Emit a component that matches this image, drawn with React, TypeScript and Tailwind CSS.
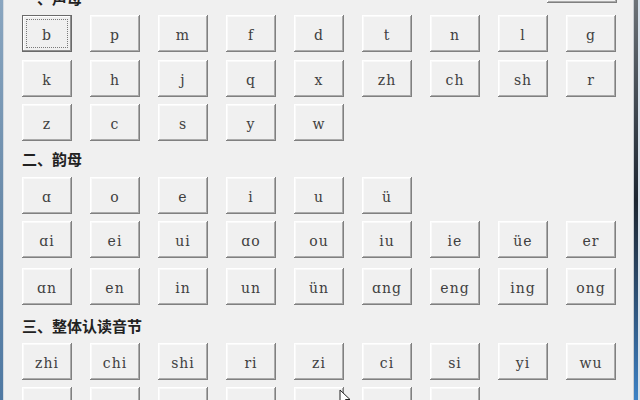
const initials = [
  ["b", "p", "m", "f", "d", "t", "n", "l", "g"],
  ["k", "h", "j", "q", "x", "zh", "ch", "sh", "r"],
  ["z", "c", "s", "y", "w"],
];

const finals = [
  ["ɑ", "o", "e", "i", "u", "ü"],
  ["ɑi", "ei", "ui", "ɑo", "ou", "iu", "ie", "üe", "er"],
  ["ɑn", "en", "in", "un", "ün", "ɑng", "eng", "ing", "ong"],
];

const whole = [
  ["zhi", "chi", "shi", "ri", "zi", "ci", "si", "yi", "wu"],
  ["yu", "ye", "yue", "yuan", "yin", "yun", "ying"],
];

const Key = ({ label, focused }: { label: string; focused?: boolean }) => (
  <button
    className={`relative h-[37px] w-[50px] shrink-0 bg-[#f0f0f0] text-[14px] leading-none tracking-[1px] text-[#404040] font-['DejaVu_Serif',serif] ${
      focused
        ? "border border-[#6a6a6a] shadow-[inset_-1px_-1px_0_#909090,inset_1px_1px_0_#ffffff]"
        : "shadow-[inset_-1px_-1px_0_#808080,inset_1px_1px_0_#ffffff,inset_-2px_-2px_0_#ababab,inset_2px_2px_0_#f9f9f9]"
    }`}
  >
    {focused && (
      <span className="absolute inset-[3px] border border-dotted border-[#7a7a7a]" />
    )}
    <span className="relative top-[1px]">{label}</span>
  </button>
);

const Row = ({ keys, className = "", focusFirst }: { keys: string[]; className?: string; focusFirst?: boolean }) => (
  <div className={`flex shrink-0 gap-[18px] ${className}`}>
    {keys.map((k, i) => (
      <Key key={k} label={k} focused={focusFirst && i === 0} />
    ))}
  </div>
);

const Heading = ({ text, className = "" }: { text: string; className?: string }) => (
  <div
    className={`flex shrink-0 items-center text-[15px] font-bold text-[#222] font-['Noto_Sans_CJK_SC',sans-serif] ${className}`}
  >
    {text}
  </div>
);

export default function App() {
  return (
    <div className="relative flex h-[400px] w-[640px] overflow-hidden bg-[#f0f0f0]">
      {/* window edge on the left */}
      <div className="flex w-[4px] shrink-0">
        <div className="w-[3px] bg-gradient-to-b from-[#8aa6c0] via-[#6b8cab] to-[#4f79a3]" />
        <div className="w-[1px] bg-[#d3d9df]" />
      </div>

      <div className="flex flex-1 flex-col pl-[18px]">
        <div className="mt-[-19px] flex h-[34px] shrink-0 items-end justify-between pr-[16px]">
          <Heading text="一、声母" className="h-[34px]" />
          <button className="mb-[12px] h-[37px] w-[70px] shrink-0 bg-[#f0f0f0] shadow-[inset_-1px_-1px_0_#808080,inset_1px_1px_0_#ffffff,inset_-2px_-2px_0_#ababab]" />
        </div>
        <Row keys={initials[0]} focusFirst />
        <Row keys={initials[1]} className="mt-[8px]" />
        <Row keys={initials[2]} className="mt-[7px]" />

        <Heading text="二、韵母" className="h-[36px] pt-[1px]" />
        <Row keys={finals[0]} />
        <Row keys={finals[1]} className="mt-[7px]" />
        <Row keys={finals[2]} className="mt-[10px]" />

        <Heading text="三、整体认读音节" className="h-[38px] pt-[4px]" />
        <Row keys={whole[0]} />
        <Row keys={whole[1]} className="mt-[7px]" />
      </div>

      {/* window edge on the right */}
      <div className="flex w-[7px] shrink-0">
        <div className="w-[1px] bg-[#c9ced3]" />
        <div className="w-[4px] bg-gradient-to-b from-[#6d7378] via-[#1d2631] to-[#3c82c6]" />
        <div className="w-[2px] bg-[#d5e0ea]" />
      </div>

      {/* mouse pointer */}
      <svg
        className="absolute left-[339px] top-[389px]"
        width="12"
        height="18"
        viewBox="0 0 12 18"
      >
        <path
          d="M1 1 L1 15 L4.5 11.5 L7 17 L9 16 L6.5 10.5 L11 10.5 Z"
          fill="#ffffff"
          stroke="#222"
          strokeWidth="1"
          strokeLinejoin="round"
        />
      </svg>
    </div>
  );
}
